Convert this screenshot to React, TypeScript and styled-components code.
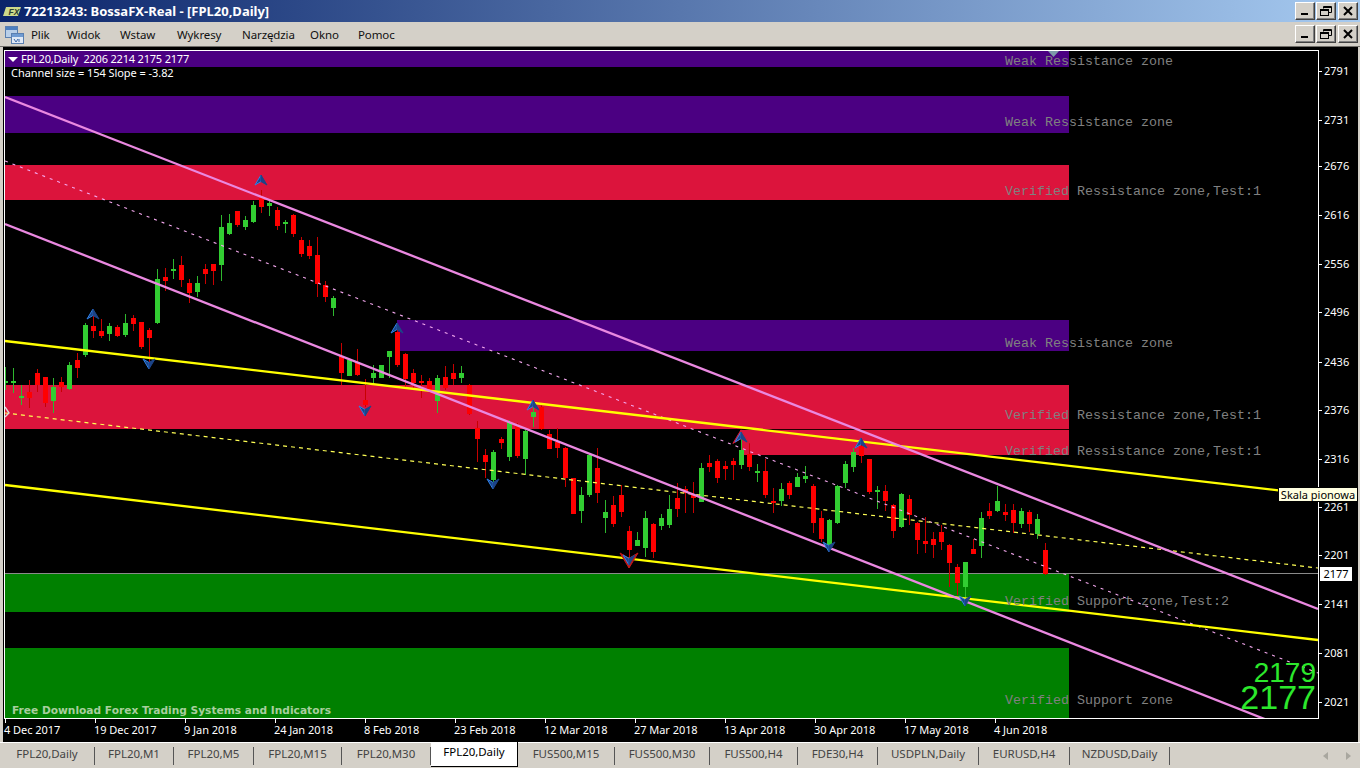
import React from "react";
import styled, { createGlobalStyle } from "styled-components";

const Global = createGlobalStyle`
  html, body { margin: 0; padding: 0; background: #d4d0c8; }
  #root { width: 1360px; height: 768px; overflow: hidden; }
`;

const UI = `"Noto Sans", "Liberation Sans", sans-serif`;

const Page = styled.div`
  width: 1360px; height: 768px; display: flex; flex-direction: column;
  background: #d4d0c8; font-family: ${UI}; overflow: hidden;
`;
const TitleBar = styled.div`
  height: 22px; display: flex; align-items: center; flex: none; padding: 0 2px 0 3px;
  background: linear-gradient(90deg, #0a246a 0%, #a6caf0 100%);
`;
const TitleText = styled.span`
  margin-left: 3px; color: #fff; font-weight: 700; font-size: 13px; letter-spacing: 0; flex: 1; white-space: nowrap;
`;
const MenuBar = styled.div`
  height: 24px; flex: none; display: flex; align-items: center; padding: 0 2px 0 5px;
  background: #d4d0c8; border-bottom: 1px solid #6f6d68;
`;
const MenuList = styled.div`
  display: flex; flex: 1; margin-left: 7px; gap: 19px; font-size: 11.5px; letter-spacing: -0.1px; color: #111;
`;
const MenuItem = styled.span<{ $w: number }>`
  width: ${p => p.$w}px; white-space: nowrap;
`;
const WinButtons = styled.div`display: flex; gap: 1px;`;
const WinBtn = styled.button<{ $close?: boolean }>`
  width: 20px; height: 18px; padding: 0; margin: 0 0 0 ${p => (p.$close ? 1 : 0)}px;
  display: flex; align-items: center; justify-content: center;
  background: #d4d0c8; border: 1px solid; border-color: #fff #404040 #404040 #fff;
  box-shadow: inset -1px -1px 0 #808080;
`;
const ChartWindow = styled.div`
  flex: none; height: 695px; margin: 0 2px 0 3px; padding: 3px 0 0 1px; box-sizing: border-box;
  background: #000; position: relative; display: grid;
  grid-template-columns: 1315px 1fr; grid-template-rows: 669px 1fr;
`;
const Plot = styled.div`
  border: 1px solid #fff; position: relative; overflow: hidden; width: 1313px; height: 667px;
`;
const PlotSvg = styled.svg`display: block;`;
const Legend = styled.div`
  position: absolute; left: 3px; top: 1px; color: #fff; font-size: 11px; line-height: 14px; white-space: nowrap;
`;
const LegendHead = styled.div`display: flex; align-items: center; gap: 3px; white-space: pre; letter-spacing: -0.19px;`;
const Caret = styled.i`
  width: 0; height: 0; border: 5px solid transparent; border-top: 5px solid #fff; border-bottom: 0; margin-right: 0;
`;
const LegendSub = styled.div`margin-left: 3px; letter-spacing: -0.06px;`;
const PriceAxis = styled.svg`display: block; grid-row: 1; grid-column: 2;`;
const DateAxis = styled.div`
  grid-column: 1 / span 2; display: flex; color: #fff; font-size: 11px; letter-spacing: -0.05px;
`;
const DateCell = styled.div`
  width: 90px; flex: none; position: relative; white-space: nowrap; padding-top: 3px; line-height: 16px;
  &::before { content: ""; position: absolute; left: 1px; top: 0; width: 1px; height: 4px; background: #fff; }
`;
const Tooltip = styled.div`
  position: absolute; left: 1275px; top: 440px; width: 80px; height: 15px; box-sizing: border-box;
  background: #ffffe1; border: 1px solid #000; color: #000; font-size: 11px; line-height: 13px; text-align: center; white-space: nowrap;
`;
const PriceTag = styled.div`
  position: absolute; left: 1317px; top: 520px; width: 32px; height: 14px;
  background: #fff; color: #000; font-size: 11px; line-height: 14px; text-align: center;
`;
const TabBar = styled.div`
  flex: 1; display: flex; align-items: center; background: #d4d0c8;
  border-top: 1px solid #fff; position: relative;
`;
const Tab = styled.div<{ $w: number; $active?: boolean }>`
  width: ${p => p.$w}px; flex: none; box-sizing: border-box; text-align: center; white-space: nowrap;
  font-size: 11.5px; letter-spacing: -0.05px; color: ${p => (p.$active ? "#000" : "#444")};
  height: ${p => (p.$active ? "25px" : "18px")}; line-height: ${p => (p.$active ? "20px" : "14px")};
  align-self: ${p => (p.$active ? "flex-start" : "center")};
  background: ${p => (p.$active ? "#fff" : "transparent")};
  border-right: 1px solid ${p => (p.$active ? "#000" : "#555")};
  border-bottom: ${p => (p.$active ? "1px solid #000" : "0")};
  margin-top: ${p => (p.$active ? "-1px" : "0")};
`;
const TabScroll = styled.div`
  margin-left: auto; display: flex; gap: 18px; padding-right: 9px; align-items: center;
`;
const ScrollArrow = styled.i<{ $right?: boolean }>`
  width: 0; height: 0; border: 4px solid transparent;
  ${p => (p.$right ? "border-left: 5px solid #a9a79f; border-right: 0;" : "border-right: 5px solid #a9a79f; border-left: 0;")}
`;

type C = [string, number, number, number, number];
const candles: C[] = [
  ["g",367,381,383,390],["g",368,381,383,393],["g",385,396,398,405],["r",380,392,398,408],["r",369,373,385,392],["r",377,377,403,407],["g",378,387,401,413],["r",377,382,387,392],
  ["g",362,365,389,390],["r",353,360,368,378],["g",323,325,355,357],["r",315,326,331,338],["r",319,331,336,338],["g",323,326,334,341],["r",325,327,336,337],["g",314,323,335,337],
  ["r",315,318,324,331],["r",322,322,347,349],["r",328,330,338,363],["g",269,279,323,324],["r",268,277,281,291],["g",259,269,271,279],["r",256,265,280,287],["r",279,283,293,303],
  ["g",276,283,292,297],["r",264,269,274,284],["r",264,264,271,285],["g",215,227,265,281],["g",214,223,234,235],["r",211,211,225,227],["g",216,220,227,230],["g",201,205,222,223],
  ["r",190,198,207,213],["g",200,203,206,216],["r",207,210,226,230],["g",220,222,224,233],["r",214,215,234,237],["r",237,240,254,257],["r",240,246,256,259],["r",237,255,284,297],
  ["r",281,285,297,302],["g",296,298,308,316],
  ["r",343,356,373,385],["g",360,360,376,376],["r",349,362,375,376],["r",379,400,405,407],["g",365,373,378,383],["g",365,365,378,378],["g",351,351,357,378],["r",327,332,365,367],
  ["r",353,354,379,387],["r",369,373,383,390],["r",375,381,383,398],["r",378,381,390,392],["g",375,378,401,413],["r",366,377,388,390],["r",364,373,379,385],["g",366,373,378,383],
  ["r",384,385,414,415],["r",421,428,439,462],["r",449,455,462,478],["g",450,452,480,482],["r",437,439,443,449],["g",420,422,457,461],["r",423,426,456,458],["g",430,431,459,475],
  ["g",403,412,417,427],["r",405,407,429,430],["r",430,434,449,449],["r",428,442,448,458],["r",447,448,478,487],["r",478,478,514,514],["g",487,495,511,523],["g",453,455,495,497],
  ["r",448,468,493,503],["g",500,512,518,533],["r",496,505,524,527],["r",485,495,512,517],["r",526,531,550,567],["g",532,540,546,546],["g",511,518,548,557],["r",523,524,552,558],
  ["g",514,518,526,530],["g",495,509,525,528],["r",483,498,509,517],
  ["r",486,489,493,513],["r",482,495,498,513],["g",463,468,502,502],["r",455,463,467,472],["r",459,461,478,483],["r",461,466,469,480],["r",458,461,465,480],["g",435,450,465,469],
  ["r",443,454,467,471],["g",464,471,473,482],["r",459,471,495,498],["r",488,501,503,513],["g",483,489,501,506],["r",481,483,495,499],["g",473,477,487,487],["g",466,476,479,483],
  ["r",484,486,523,533],["r",511,518,539,542],["g",519,520,545,547],["g",485,486,523,524],["g",461,464,483,488],["g",448,452,467,472],["r",443,446,456,463],["r",459,459,492,494],
  ["g",486,490,492,509],["r",485,491,501,511],["r",504,505,531,538],["g",493,494,527,528],["r",495,499,515,525],["r",522,523,540,554],["r",517,541,544,553],["r",532,539,545,558],
  ["r",525,532,542,550],["r",544,545,563,587],["r",564,567,583,595],["g",562,562,587,598],["r",539,549,554,554],["g",512,518,546,558],["r",503,511,516,519],["g",486,501,511,512],
  ["r",504,512,515,521],["r",504,510,523,533],["g",508,511,524,528],["r",510,512,524,532],["g",514,519,534,539],["r",543,550,574,575],
];

const zones: [number, number, number, string][] = [
  [5, 51, 67, "#4b0082"],[5, 96, 133, "#4b0082"],[5, 165, 200, "#dc143c"],[397, 320, 351, "#4b0082"],
  [5, 385, 429, "#dc143c"],[741, 429, 455, "#dc143c"],[5, 574, 612, "#008000"],[5, 648, 718, "#008000"],
];
const zoneLabels: [number, string][] = [
  [65, "Weak Ressistance zone"],[126, "Weak Ressistance zone"],[195, "Verified Ressistance zone,Test:1"],[347, "Weak Ressistance zone"],
  [419, "Verified Ressistance zone,Test:1"],[455, "Verified Ressistance zone,Test:1"],[605, "Verified Support zone,Test:2"],[704, "Verified Support zone"],
];
const ups: [number, number][] = [[93,315],[261,181],[397,329],[533,406],[741,438],[861,444]];
const downs: [number, number][] = [[149,363],[365,410],[493,483],[829,546],[965,600],[629,559]];
const prices: [number, number][] = [[2791,71],[2731,120],[2676,166],[2616,215],[2556,264],[2496,312],[2436,362],[2376,410],[2316,459],[2261,507],[2201,555],[2141,604],[2081,653],[2021,702]];
const dates = ["4 Dec 2017","19 Dec 2017","9 Jan 2018","24 Jan 2018","8 Feb 2018","23 Feb 2018","12 Mar 2018","27 Mar 2018","13 Apr 2018","30 Apr 2018","17 May 2018","4 Jun 2018"];
const menu: [string, number][] = [["Plik",17],["Widok",34],["Wstaw",38],["Wykresy",46],["Narzędzia",49],["Okno",29],["Pomoc",38]];
const tabs: [string, number][] = [["FPL20,Daily",95],["FPL20,M1",79],["FPL20,M5",80],["FPL20,M15",88],["FPL20,M30",89],["FPL20,Daily",87],["FUS500,M15",97],["FUS500,M30",95],["FUS500,H4",88],["FDE30,H4",80],["USDPLN,Daily",101],["EURUSD,H4",91],["NZDUSD,Daily",100]];

const Minimize = () => <svg width="12" height="10"><rect x="2" y="7" width="7" height="2" fill="#000" /></svg>;
const Restore = () => (
  <svg width="14" height="12" fill="none" stroke="#000">
    <path d="M4.5 3.5V1.5H12.5V7.5H9.5" /><path d="M4.5 2.5H12.5" />
    <rect x="1.5" y="4.5" width="8" height="6" /><path d="M1.5 5.5H9.5" />
  </svg>
);
const Close = () => <svg width="12" height="10" stroke="#000" strokeWidth="2"><path d="M2 1L10 9M10 1L2 9" /></svg>;
const Controls = () => (
  <WinButtons>
    <WinBtn><Minimize /></WinBtn><WinBtn><Restore /></WinBtn><WinBtn $close><Close /></WinBtn>
  </WinButtons>
);
const FxLogo = () => (
  <svg width="18" height="9" viewBox="0 0 18 9">
    <path d="M3 0H18L15 9H0Z" fill="#cdd98a" />
    <text x="5.5" y="7.8" fontFamily="Liberation Sans" fontWeight="700" fontStyle="italic" fontSize="8.5" fill="#2c4030">FX</text>
  </svg>
);
const DocIcon = () => (
  <svg width="19" height="19" viewBox="0 0 19 19">
    <rect x="0.5" y="1.5" width="12" height="11" fill="#b9cfe8" stroke="#5a7fb0" />
    <rect x="1" y="2" width="11" height="3" fill="#4d7fc0" />
    <rect x="6.5" y="8.5" width="12" height="10" fill="#dfe9f6" stroke="#5a7fb0" />
    <rect x="7" y="9" width="11" height="3" fill="#6f9bd2" />
    <path d="M9 14l2 3 2-3M14 14v3" stroke="#3b68a8" fill="none" />
  </svg>
);

const Arrow = ({ x, y, dir, size = 1, left = "#2f80e6", right = "#1c4488" }: { x: number; y: number; dir: 1 | -1; size?: number; left?: string; right?: string }) => {
  const tip = y - dir * 6 * size;
  const base = y + dir * 4 * size;
  const notch = y + dir * 0.5 * size;
  const w = 6 * size;
  return (
    <g>
      <path d={`M${x} ${tip}L${x - w} ${base}L${x} ${notch}Z`} fill={right} stroke={left} strokeWidth="1" strokeLinejoin="round" />
      <path d={`M${x} ${tip}L${x + w} ${base}L${x} ${notch}Z`} fill={right} stroke={right} strokeWidth="1" strokeLinejoin="round" />
    </g>
  );
};

const Chart = () => (
  <PlotSvg width="1313" height="667" viewBox="5 51 1313 667">
    <rect x="5" y="51" width="1313" height="667" fill="#000" />
    <g shapeRendering="crispEdges">
      {zones.map(([x, a, b, c]) => <rect key={a} x={x} y={a} width={1069 - x} height={b - a} fill={c} />)}
      <rect x="741" y="429" width="328" height="1" fill="#200" />
    </g>
    <g shapeRendering="crispEdges">
      <rect x="5" y="573" width="1313" height="1" fill="#8a8a8a" />
      {candles.map(([k, h, t, b, l], i) => {
        const x = 5 + i * 8;
        return (
          <g key={i}>
            <rect x={x} y={h} width="1" height={l - h} fill={k === "g" ? "#2eb82e" : "#c80000"} />
            <rect x={x - 2} y={t} width="5" height={Math.max(b - t, 2)} fill={k === "g" ? "#32cd32" : "#ff0000"} />
          </g>
        );
      })}
    </g>
    <g fill="none">
      <path d="M5 161L1318 673" stroke="#f4a8ee" strokeWidth="1.1" strokeDasharray="3 5" />
      <path d="M5 413L1318 568" stroke="#ffff55" strokeWidth="1.2" strokeDasharray="4 4" />
      <path d="M5 341L1318 495" stroke="#ffff00" strokeWidth="2.3" />
      <path d="M5 485L1318 640" stroke="#ffff00" strokeWidth="2.3" />
      <path d="M5 97L1318 609" stroke="#ea88e0" strokeWidth="2.3" />
      <path d="M5 224L1318 740" stroke="#ea88e0" strokeWidth="2.3" />
    </g>
    <Arrow x={741} y={438} dir={1} size={1.35} left="#d01a3a" right="#d01a3a" />
    <Arrow x={629} y={559} dir={-1} size={1.5} left="#c01818" right="#c01818" />
    {ups.map(([x, y]) => <Arrow key={x} x={x} y={y} dir={1} />)}
    {downs.map(([x, y]) => <Arrow key={x} x={x} y={y} dir={-1} />)}
    <path d="M5 407L9 413L5 417" fill="none" stroke="#d8d8d8" strokeWidth="1.4" />
    <path d="M1048 51H1059L1053.5 57Z" fill="#7d98a8" />
    <g fontFamily="Liberation Mono, monospace" fontSize="13.33" fill="#808080">
      {zoneLabels.map(([y, t]) => <text key={y} x="1005" y={y}>{t}</text>)}
    </g>
    <text x="12" y="714" fontFamily="DejaVu Sans, sans-serif" fontWeight="700" fontSize="10.5" fill="#a8cf9e" textLength="319" lengthAdjust="spacingAndGlyphs">Free Download Forex Trading Systems and Indicators</text>
    <g fontFamily="Liberation Sans, sans-serif" fill="#2ce82c" textAnchor="end">
      <text x="1316" y="682" fontSize="28">2179</text>
      <text x="1316" y="709" fontSize="34">2177</text>
    </g>
  </PlotSvg>
);

export default function App() {
  return (
    <Page>
      <Global />
      <TitleBar>
        <FxLogo />
        <TitleText>72213243: BossaFX-Real - [FPL20,Daily]</TitleText>
        <Controls />
      </TitleBar>
      <MenuBar>
        <DocIcon />
        <MenuList>{menu.map(([m, w]) => <MenuItem key={m} $w={w}>{m}</MenuItem>)}</MenuList>
        <Controls />
      </MenuBar>
      <ChartWindow>
        <Plot>
          <Chart />
          <Legend>
            <LegendHead><Caret />FPL20,Daily  2206 2214 2175 2177</LegendHead>
            <LegendSub>Channel size = 154 Slope = -3.82</LegendSub>
          </Legend>
        </Plot>
        <PriceAxis width="40" height="669" viewBox="1319 50 40 669">
          {prices.map(([p, y]) => (
            <g key={p}>
              <rect x="1319" y={y} width="3" height="1" fill="#fff" />
              <text x="1324" y={y + 4} fill="#fff" fontFamily={UI} fontSize="11">{p}</text>
            </g>
          ))}
        </PriceAxis>
        <DateAxis>
          {dates.map(d => <DateCell key={d}>{d}</DateCell>)}
        </DateAxis>
        <Tooltip>Skala pionowa</Tooltip>
        <PriceTag>2177</PriceTag>
      </ChartWindow>
      <TabBar>
        {tabs.map(([t, w], i) => <Tab key={i} $w={w} $active={i === 5}>{t}</Tab>)}
        <TabScroll><ScrollArrow /><ScrollArrow $right /></TabScroll>
      </TabBar>
    </Page>
  );
}
